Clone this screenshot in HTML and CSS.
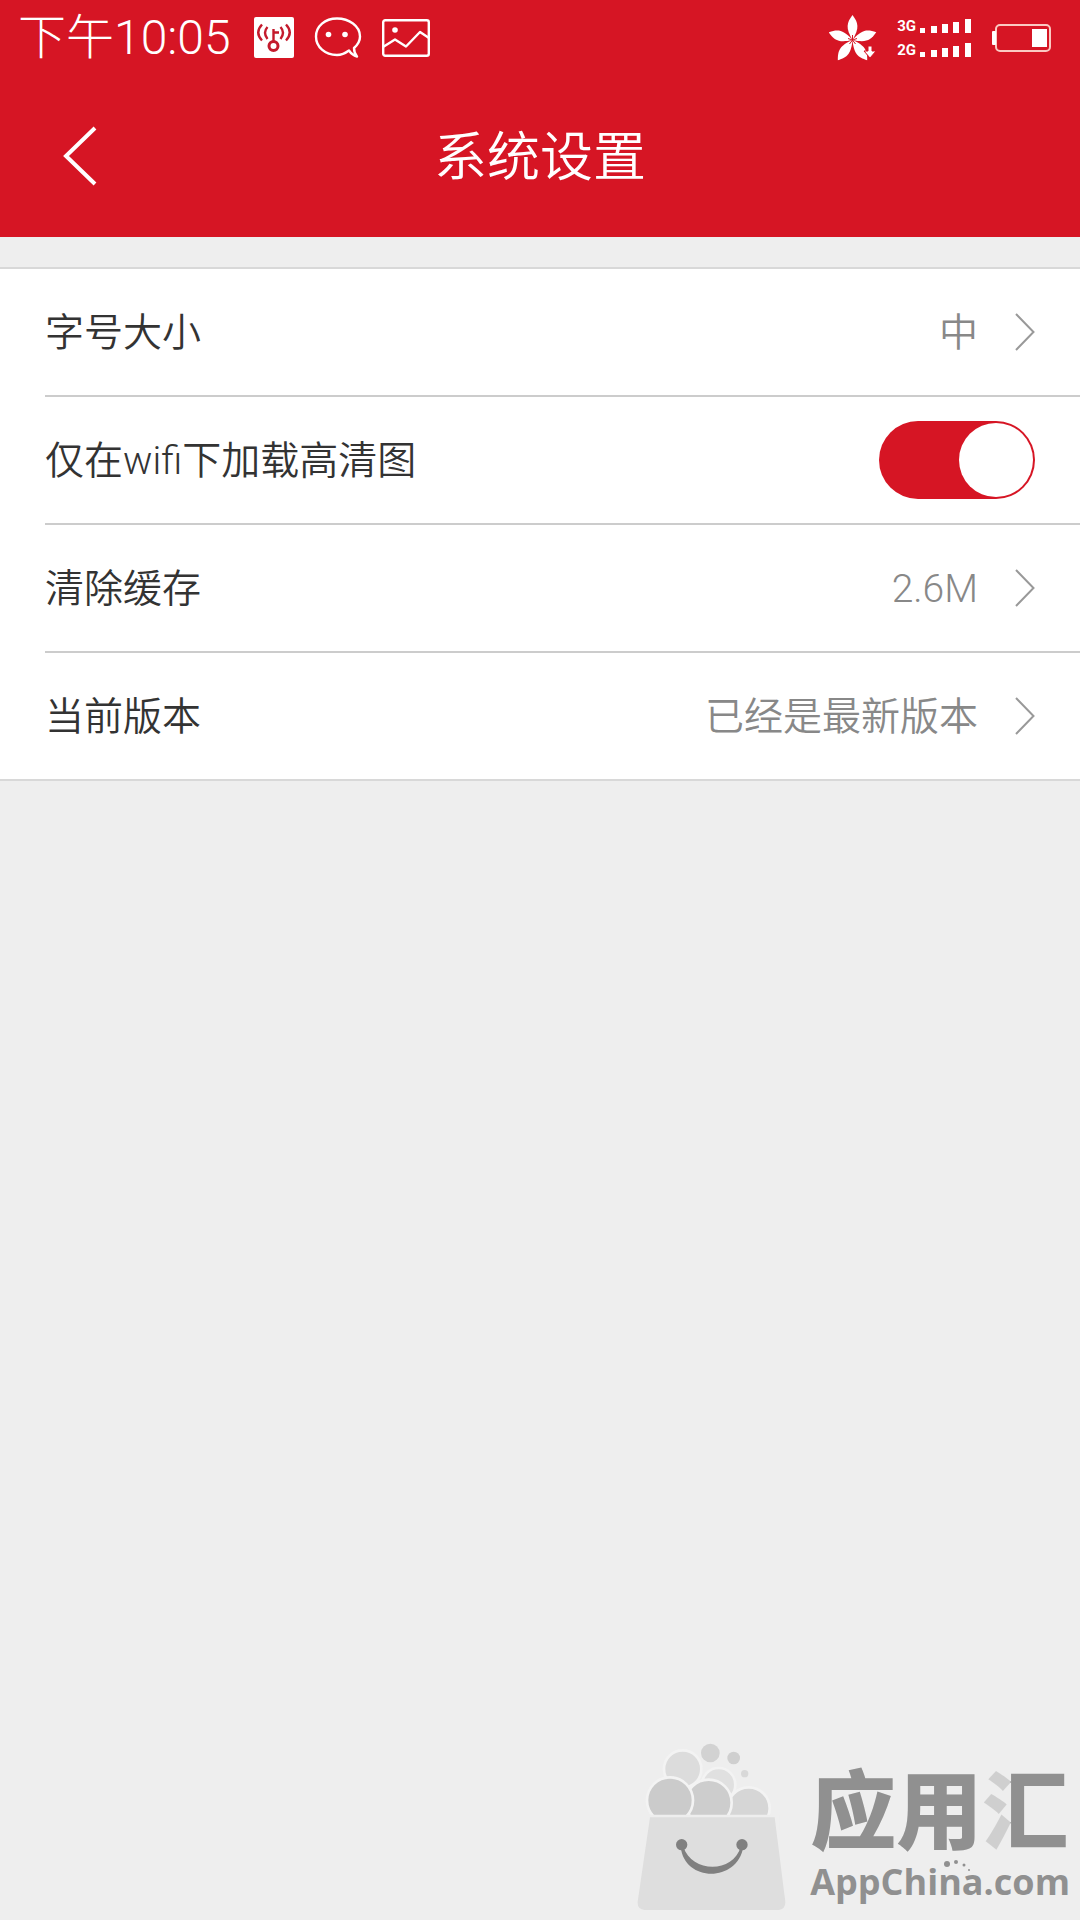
FILE: index.html
```html
<!DOCTYPE html>
<html lang="zh-CN">
  <head>
    <meta charset="utf-8" />
    <title>系统设置</title>
    <meta name="viewport" content="width=device-width, initial-scale=1" />
    <link rel="stylesheet" href="styles.css">
  </head>
  <body>
    <div class="status-bar">
      <span class="clock">下午10:05</span>
      <svg class="icon-hotspot" width="40" height="42" viewBox="0 0 40 42">
        <rect width="40" height="41" rx="2" fill="#fff"/>
        <g fill="none" stroke="#c41a2c" stroke-width="2.4">
          <circle cx="19.500" cy="29" r="4.500" stroke-width="3"/>
          <path d="M19.500 25V12M20 15.500h5M13.500 10q-5 5.500 0 12M8 7.500q-7.500 8 0 16M26.500 10q5 5.500 0 12M32 7.500q7.500 8 0 16"/>
        </g>
      </svg>
      <svg class="icon-chat" width="48" height="42" viewBox="0 0 48 42">
        <path d="M35 33.500C31 36.500 27 38 23 38C11 38 2 30 2 19.500S11 1.500 23 1.500S46 9 46 19.500C46 24 43.500 28 40 31C40 34 41 37 43 39.500C39.500 38.500 37 36.500 35 33.500Z" fill="none" stroke="#fff" stroke-width="2.4" stroke-linejoin="round"/>
        <circle cx="14.500" cy="17.500" r="2.800" fill="#fff"/>
        <circle cx="31" cy="17.500" r="2.800" fill="#fff"/>
      </svg>
      <svg class="icon-image" width="48" height="38" viewBox="0 0 48 38">
        <g fill="none" stroke="#fff" stroke-width="2.4" stroke-linejoin="round">
          <rect x="1.200" y="1.200" width="45.600" height="35.600" rx="2"/>
          <path d="M1 28L13 20.500L24 27.500L38 13L47 19"/>
        </g>
        <circle cx="13" cy="11" r="2.800" fill="#fff"/>
      </svg>

      <div class="status-right">
        <svg width="48" height="46" viewBox="0 0 48 46">
          <g fill="#fff">
            <path id="petal" d="M23.500 25C16.500 13 17.500 8 23.500 0C29.500 8 30.500 13 23.500 25Z"/>
            <use href="#petal" transform="rotate(72 23.500 25)"/>
            <use href="#petal" transform="rotate(144 23.500 25)"/>
            <use href="#petal" transform="rotate(216 23.500 25)"/>
            <use href="#petal" transform="rotate(288 23.500 25)"/>
          </g>
          <path d="M39 31h4v5h4L41 43L35 36h4Z" fill="#fff" stroke="#d61524" stroke-width="1"/>
          <path d="M23.500 25V20M23.500 25L28 23.500M23.500 25L26.500 29M23.500 25L20.500 29M23.500 25L19 23.500" stroke="#d61524" stroke-width="1"/>
        </svg>
        <div class="signals">
          <div class="signal">
            <span>3G</span>
            <svg width="52" height="16" viewBox="0 0 52 16" fill="#fff">
              <path d="M0 10h5v5H0zM11 8h6v7h-6zM22 6h6v9h-6zM33 4h6v11h-6zM45 1h6v14h-6z"/>
            </svg>
          </div>
          <div class="signal">
            <span>2G</span>
            <svg width="52" height="16" viewBox="0 0 52 16" fill="#fff">
              <path d="M0 10h5v5H0zM11 8h6v7h-6zM22 6h6v9h-6zM33 4h6v11h-6zM45 1h6v14h-6z"/>
            </svg>
          </div>
        </div>
        <svg width="60" height="28" viewBox="0 0 60 28">
          <rect x="4" y="1" width="54" height="26" rx="4" fill="none" stroke="#fbc9c2" stroke-width="2"/>
          <rect y="7" width="4" height="14" rx="1" fill="#fff"/>
          <rect x="40" y="5" width="15" height="18" fill="#fff"/>
        </svg>
      </div>
    </div>

    <header>
      <button class="back" type="button" aria-label="返回">
        <svg width="36" height="62" viewBox="0 0 36 62">
          <path d="M33 3L4 31L33 59" fill="none" stroke="#fff" stroke-width="4"/>
        </svg>
      </button>
      <h1>系统设置</h1>
    </header>

    <main>
      <ul class="settings">
        <li>
          <button class="row" type="button">
            <span>字号大小</span>
            <span class="value">中</span>
            <svg class="chevron" width="20" height="38" viewBox="0 0 20 38"><path d="M1 1L18.500 19L1 37"/></svg>
          </button>
        </li>
        <li>
          <label class="row">
            <span>仅在wifi下加载高清图</span>
            <input class="switch" type="checkbox" checked>
          </label>
        </li>
        <li>
          <button class="row" type="button">
            <span>清除缓存</span>
            <span class="value">2.6M</span>
            <svg class="chevron" width="20" height="38" viewBox="0 0 20 38"><path d="M1 1L18.500 19L1 37"/></svg>
          </button>
        </li>
        <li>
          <button class="row" type="button">
            <span>当前版本</span>
            <span class="value">已经是最新版本</span>
            <svg class="chevron" width="20" height="38" viewBox="0 0 20 38"><path d="M1 1L18.500 19L1 37"/></svg>
          </button>
        </li>
      </ul>
    </main>

    <footer>
      <svg width="150" height="170" viewBox="50 36 450 510">
        <g stroke="#f3f3f3" stroke-width="8">
          <circle cx="298" cy="164" r="50" fill="#e0e0e0"/>
          <circle cx="190" cy="117" r="56" fill="#dcdcdc"/>
          <circle cx="388" cy="235" r="63" fill="#d6d6d6"/>
          <circle cx="268" cy="218" r="69" fill="#cdcdcd"/>
          <circle cx="152" cy="211" r="69" fill="#cbcbcb"/>
        </g>
        <circle cx="273" cy="69" r="28" fill="#d2d2d2"/>
        <circle cx="343" cy="84" r="19" fill="#cfcfcf"/>
        <circle cx="376" cy="131" r="11" fill="#d8d8d8"/>
        <path d="M70 254H480V300H70Z" fill="#eee"/>
        <path d="M92 262H466L498 515Q499 538 478 540H76Q53 538 55 515Z" fill="#dedede"/>
        <circle cx="187" cy="344" r="17" fill="#808080"/>
        <circle cx="368" cy="344" r="17" fill="#808080"/>
        <path d="M184 350C195 458 355 458 372 350L364 350C342 430 218 430 192 350Z" fill="#808080"/>
      </svg>
      <div class="brand">
        <strong>应用<span>汇</span></strong>
        <small>AppChina.com</small>
        <svg class="brand-dots" width="26" height="12" viewBox="0 0 26 12" fill="#909090">
          <circle cx="3" cy="4" r="3"/>
          <circle cx="12" cy="2" r="2"/>
          <circle cx="20" cy="5" r="1.500"/>
          <circle cx="25" cy="10" r="1"/>
        </svg>
      </div>
    </footer>
  </body>
</html>
```

FILE: styles.css
```css
* {box-sizing: border-box;}

body {
  display: flex;
  flex-direction: column;
  min-height: 100vh;
  margin: 0;
  background-color: #eee;
  color: #333;
  font-family: Roboto, "Noto Sans CJK SC", sans-serif;
  font-weight: 350;
}

svg {
  display: block;
  flex: none;
}

button {
  border: 0;
  background: none;
  color: inherit;
  font: inherit;
  cursor: pointer;
}

.status-bar {
  display: flex;
  align-items: center;
  height: 75px;
  padding: 0 28px 0 18px;
  background-color: #d61524;
  color: #fff;
}

.clock {
  margin-right: 23px;
  font-size: 48px;
  font-weight: 300;
  line-height: 56px;
}

.icon-chat {
  margin: 0 20px;
}

.status-right {
  display: flex;
  align-items: center;
  gap: 20px;
  margin-left: auto;
}

.signals {
  display: grid;
  gap: 8px;
}

.signal {
  display: flex;
  align-items: center;
  gap: 4px;
  font-size: 15px;
  font-weight: 700;
  line-height: 16px;
}

header {
  display: grid;
  grid-template-columns: 160px 1fr 160px;
  align-items: center;
  height: 162px;
  background-color: #d61524;
  color: #fff;
}

.back {
  padding: 20px 62px;
}

h1 {
  margin: 0;
  padding-top: 4px;
  font-size: 53px;
  font-weight: 350;
  line-height: 64px;
  text-align: center;
}

.settings {
  margin: 30px 0 0;
  padding: 0;
  border: solid #d8d8d8;
  border-width: 2px 0;
  background-color: #fff;
  list-style: none;
}

.settings li {
  margin-left: 45px;
}

.settings li + li {
  border-top: 2px solid #ccc;
}

.row {
  display: flex;
  align-items: center;
  width: 100%;
  height: 126px;
  padding: 0 45px 0 0;
  font-size: 39px;
  line-height: 48px;
  text-align: left;
}

.row span {
  padding-top: 2px;
}

.value {
  margin-left: auto;
  color: #888;
}

.chevron {
  margin-left: 37px;
  fill: none;
  stroke: #999;
  stroke-width: 2;
}

.switch {
  appearance: none;
  display: flex;
  width: 156px;
  height: 78px;
  margin: 0 0 0 auto;
  padding: 2px;
  border-radius: 39px;
  background-color: #ccc;
  cursor: pointer;
}

.switch::before {
  content: "";
  width: 74px;
  height: 74px;
  border-radius: 50%;
  background-color: #fff;
}

.switch:checked {
  justify-content: flex-end;
  background-color: #d61524;
}

footer {
  display: flex;
  justify-content: flex-end;
  align-items: flex-end;
  gap: 24px;
  margin-top: auto;
  padding: 0 10px 8px;
  color: #909090;
}

.brand {
  position: relative;
  padding-bottom: 8px;
}

.brand strong {
  display: block;
  font-size: 86px;
  font-weight: 900;
  line-height: 92px;
}

/* the water radical is lighter than the rest of the character */
.brand strong span {
  background: linear-gradient(90deg, #cfcfcf 33%, #909090 33%);
  background-clip: text;
  -webkit-background-clip: text;
  color: transparent;
}

.brand small {
  display: block;
  font-family: "Open Sans", sans-serif;
  font-size: 36px;
  font-weight: 700;
  line-height: 44px;
}

.brand-dots {
  position: absolute;
  right: 100px;
  bottom: 40px;
}
```
